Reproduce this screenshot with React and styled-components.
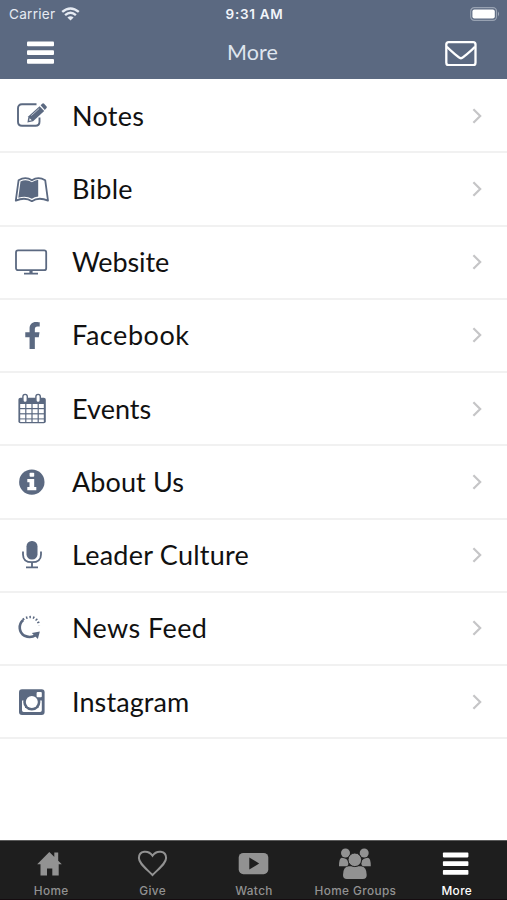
import React from "react";
import styled, { createGlobalStyle } from "styled-components";
import { FaFacebookF } from "react-icons/fa";

const GlobalStyle = createGlobalStyle`
  * {
    box-sizing: border-box;
  }
  body {
    margin: 0;
    background: #fff;
  }
`;

const Screen = styled.div`
  display: flex;
  flex-direction: column;
  width: 507px;
  height: 900px;
  overflow: hidden;
  background: #fff;
`;

const Header = styled.header`
  flex: none;
  height: 79px;
  background: #5b6981;
  color: #fff;
`;

const StatusBar = styled.div`
  display: grid;
  grid-template-columns: 1fr auto 1fr;
  align-items: center;
  height: 27px;
  padding: 0 7px 0 9px;
  font-family: Inter, "Liberation Sans", sans-serif;
  font-size: 13.6px;
  line-height: 27px;
`;

const Carrier = styled.div`
  display: flex;
  align-items: center;
  gap: 6px;
  color: #e6ebf3;
  letter-spacing: 0.25px;
`;

const Clock = styled.div`
  padding-top: 1px;
  color: #f2f5fa;
  font-weight: 600;
  font-size: 13.5px;
  letter-spacing: 0.7px;
`;

const BatterySlot = styled.div`
  display: flex;
  justify-content: flex-end;
`;

const NavBar = styled.div`
  display: grid;
  grid-template-columns: 1fr auto 1fr;
  align-items: center;
  height: 52px;
  padding: 0 30px 0 27px;
`;

const Title = styled.h1`
  margin: 0;
  padding: 0 0 2px 1px;
  color: #dfe5ee;
  font-family: Lato, "Liberation Sans", sans-serif;
  font-size: 21.5px;
  font-weight: 400;
  line-height: 50px;
  letter-spacing: 0.1px;
`;

const NavButton = styled.button`
  display: flex;
  justify-self: ${({ $end }) => ($end ? "end" : "start")};
  margin: 0;
  padding: 0;
  border: 0;
  background: none;
  color: #fff;
`;

const List = styled.main`
  flex: 1;
  padding-top: 1px;
`;

const Row = styled.div`
  display: flex;
  align-items: center;
  height: 73.25px;
  padding: 0 24px 0 14px;
  border-bottom: 2px solid #f1f1f1;
  color: #5b6981;
`;

const IconSlot = styled.div`
  display: flex;
  align-items: center;
  justify-content: center;
  width: 36px;
  height: 36px;
`;

const Label = styled.span`
  flex: 1;
  padding-left: 22px;
  color: #111;
  font-family: Lato, "Liberation Sans", sans-serif;
  font-size: 27px;
  line-height: 36px;
  letter-spacing: ${({ $tracking }) => $tracking}px;
`;

const TabBar = styled.nav`
  display: flex;
  flex: none;
  height: 60px;
  border-top: 1px solid #5a5a5a;
  border-bottom: 1px solid #150c10;
  background: #1e1e1e;
`;

const Tab = styled.div`
  display: flex;
  flex: 1;
  flex-direction: column;
  align-items: center;
  color: ${({ $active }) => ($active ? "#fff" : "#929292")};
`;

const TabLabel = styled.span`
  margin-top: 2px;
  padding-left: 1px;
  font-family: Inter, "Liberation Sans", sans-serif;
  font-size: 11.8px;
  font-weight: 500;
  line-height: 16px;
  letter-spacing: 0.4px;
`;

const WifiIcon = () => (
  <svg width="19" height="14" viewBox="0 0 19 14" fill="none" stroke="currentColor" strokeWidth="2.4">
    <path d="M1.2 4.9Q9.5-2.1 17.8 4.9" />
    <path d="M4.1 8.1Q9.5 3.4 14.9 8.1" />
    <path d="M9.5 13.6 6.4 10.6Q9.5 8 12.6 10.6Z" fill="currentColor" stroke="none" />
  </svg>
);

const BatteryIcon = () => (
  <svg width="30" height="14" viewBox="0 0 30 14">
    <rect x="0.7" y="0.7" width="25.8" height="12.6" rx="3.6" fill="none" stroke="#98a2b2" strokeWidth="1.2" />
    <rect x="2.4" y="2.4" width="22.4" height="9.2" rx="2" fill="#fff" />
    <path d="M28 4.6Q30 7 28 9.4Z" fill="#a4adbb" />
  </svg>
);

const MenuIcon = () => (
  <svg width="28" height="24" viewBox="0 0 28 24" fill="currentColor">
    <rect x="0" y="0.5" width="27" height="4.8" rx="1" />
    <rect x="0" y="9.2" width="27" height="4.8" rx="1" />
    <rect x="0" y="18" width="27" height="4.8" rx="1" />
  </svg>
);

const MailIcon = () => (
  <svg width="32" height="26" viewBox="0 0 32 26" fill="none" stroke="currentColor" strokeWidth="2.3">
    <rect x="1.3" y="2.2" width="29.2" height="23" rx="2.4" />
    <path d="M1.8 6.8C6 11.2 10 14 13.6 17.2Q15.9 19.2 18.2 17.2C21.8 14 26 11.2 30 6.8" />
  </svg>
);

const NotesIcon = () => (
  <svg width="36" height="36" viewBox="0 0 36 36">
    <path
      d="M22.5 6.3H8Q4 6.3 4 10.3V23.7Q4 27.7 8 27.7H21.5Q25.5 27.7 25.5 23.7V19.5"
      fill="none"
      stroke="currentColor"
      strokeWidth="1.9"
    />
    <path d="M13.4 24.4 14.5 18.3 25.6 8.2 30.2 13.1 19.1 23.2Z" fill="currentColor" />
    <path d="M26.6 7.3 28.5 5.6Q29.3 5 30.1 5.8L32.6 8.5Q33.3 9.3 32.5 10.1L30.8 12.1Z" fill="currentColor" />
    <path d="M17.3 17.6 25.2 10.5" stroke="#c7cdd7" strokeWidth="0.9" />
    <path d="M15.6 20.2 17.8 22.3 15.2 22.8Z" fill="#fff" />
  </svg>
);

const BookIcon = () => (
  <svg width="36" height="36" viewBox="0 0 36 36">
    <path
      d="M4.6 9.2Q11.6 5 17.9 9.3 24.2 5 31.2 9.2L34 29.6Q24.6 25.6 17.9 30.2 11.2 25.6 1.8 29.6Z"
      fill="#fff"
      stroke="currentColor"
      strokeWidth="1.8"
      strokeLinejoin="round"
    />
    <path d="M6.5 10.4Q12.4 7.5 17.9 11.2 20.6 9.2 24.2 8.7V25.6Q20.5 26 17.9 27.8 12 24.3 4.3 26.7Z" fill="currentColor" />
  </svg>
);

const MonitorIcon = () => (
  <svg width="36" height="36" viewBox="0 0 36 36">
    <rect x="2" y="6.4" width="30.2" height="19.8" rx="2" fill="none" stroke="currentColor" strokeWidth="1.8" />
    <path d="M15.4 26.5H18.6V28.8H24V30.6H10V28.8H15.4Z" fill="currentColor" />
  </svg>
);

const columns = [6.2, 12.4, 18.6, 24.8];
const lines = [13, 18.2, 23.4];

const CalendarIcon = () => (
  <svg width="36" height="36" viewBox="0 0 36 36">
    <rect x="4.4" y="6.7" width="27.4" height="25.6" rx="2" fill="currentColor" />
    {lines.map((y) =>
      columns.map((x) => <rect key={`${x}-${y}`} x={x} y={y} width="5" height="4" fill="#fff" />)
    )}
    {columns.map((x) => (
      <rect key={x} x={x} y="28.4" width="5" height="2.6" fill="#fff" />
    ))}
    <rect x="8.9" y="3.4" width="4.4" height="8" rx="2.2" fill="#fff" stroke="currentColor" strokeWidth="1.4" />
    <rect x="21.9" y="3.4" width="4.4" height="8" rx="2.2" fill="#fff" stroke="currentColor" strokeWidth="1.4" />
  </svg>
);

const InfoIcon = () => (
  <svg width="36" height="36" viewBox="0 0 36 36">
    <circle cx="17.8" cy="18.1" r="12.7" fill="currentColor" />
    <rect x="15.6" y="8.7" width="4.6" height="4" rx="0.8" fill="#fff" />
    <path d="M13.3 15H20.2V23H22.3V26.3H13.3V23H15.5V18.2H13.3Z" fill="#fff" />
  </svg>
);

const MicIcon = () => (
  <svg width="36" height="36" viewBox="0 0 36 36">
    <rect x="12.5" y="4" width="11" height="18.4" rx="5.2" fill="currentColor" />
    <path
      d="M9 14.4V17.4Q9 25.2 18 25.2T27 17.4V14.4M18 25.2V30.2M12 30.3H24"
      fill="none"
      stroke="currentColor"
      strokeWidth="1.8"
    />
  </svg>
);

const FeedIcon = () => (
  <svg width="36" height="36" viewBox="0 0 36 36" fill="none" stroke="currentColor">
    <path d="M9.2 9.9C4 14.4 4.8 22.6 10.6 25.8Q16.6 28.6 22 25" strokeWidth="2.6" />
    <path d="M17.8 23 25.8 21.4 23.9 28.9Z" fill="currentColor" stroke="none" />
    <path d="M8.9 9.6Q12.8 7 17 7 23.2 7.6 25.4 15.4" strokeWidth="2.4" strokeDasharray="1.5 2" />
  </svg>
);

const InstagramIcon = () => (
  <svg width="36" height="36" viewBox="0 0 36 36">
    <rect x="5" y="5.3" width="25.6" height="25.6" rx="3" fill="currentColor" />
    <path d="M8 16.5H11V24H24.5V16.5H27.8V26.3Q27.8 28 26.1 28H9.7Q8 28 8 26.3Z" fill="#fff" />
    <circle cx="17.8" cy="18" r="8.6" fill="currentColor" />
    <circle cx="17.8" cy="18" r="6" fill="#fff" />
    <rect x="22.6" y="8" width="5.2" height="5.2" rx="1" fill="#fff" />
  </svg>
);

const ChevronIcon = () => (
  <svg width="12" height="18" viewBox="0 0 12 18" fill="none" stroke="#c5c5c7" strokeWidth="2.2">
    <path d="M2.4 2.2 9.2 9 2.4 15.8" />
  </svg>
);

const HomeIcon = () => (
  <svg width="42" height="40" viewBox="0 0 42 40">
    <path
      d="M19.3 11 31.8 23.2H28.7V34.5H22.3V27.6H17V34.5H10.5V23.2H7.2ZM24.3 11.4H28.2V19.8L24.3 16Z"
      fill="currentColor"
    />
  </svg>
);

const HeartIcon = () => (
  <svg width="42" height="40" viewBox="0 0 42 40">
    <path
      d="M21.5 34C14 26.6 7.9 22.1 7.9 17.1 7.9 9.4 17.3 8.7 21.5 14.7 25.7 8.7 35.1 9.4 35.1 17.1 35.1 22.1 29 26.6 21.5 34Z"
      fill="none"
      stroke="currentColor"
      strokeWidth="2"
    />
  </svg>
);

const WatchIcon = () => (
  <svg width="42" height="40" viewBox="0 0 42 40">
    <rect x="5.7" y="12" width="29.6" height="21.2" rx="4.6" fill="currentColor" />
    <path d="M16.3 16.5 26.2 22.5 16.3 28.5Z" fill="#1e1e1e" />
  </svg>
);

const GroupsIcon = () => (
  <svg width="42" height="40" viewBox="0 0 42 40" fill="currentColor">
    <circle cx="11.5" cy="12" r="4.5" />
    <circle cx="30.2" cy="12" r="4.5" />
    <path d="M7.7 16.8Q5 17.3 5 25.2H12.7Q14.6 25 14.5 21Q13.2 17.2 7.7 16.8ZM34 16.8Q36.8 17.3 36.8 25.2H29.1Q27.2 25 27.3 21Q28.6 17.2 34 16.8Z" />
    <path d="M14.6 25.3H27.1Q32.7 25.8 32.7 34 32.7 37.9 28.9 37.9H12.8Q9 37.9 9 34 9 25.8 14.6 25.3Z" />
    <circle cx="20.8" cy="18.8" r="6.8" stroke="#1e1e1e" strokeWidth="1" />
  </svg>
);

const MoreIcon = () => (
  <svg width="42" height="40" viewBox="0 0 42 40" fill="currentColor">
    <rect x="7.9" y="11.6" width="25.5" height="4.8" rx="0.8" />
    <rect x="7.9" y="20.3" width="25.5" height="4.8" rx="0.8" />
    <rect x="7.9" y="29" width="25.5" height="4.8" rx="0.8" />
  </svg>
);

const menuItems = [
  { label: "Notes", icon: <NotesIcon />, tracking: 0.3 },
  { label: "Bible", icon: <BookIcon />, tracking: 0.3 },
  { label: "Website", icon: <MonitorIcon />, tracking: -0.1 },
  { label: "Facebook", icon: <FaFacebookF size={27} />, tracking: 0.55 },
  { label: "Events", icon: <CalendarIcon />, tracking: 0.05 },
  { label: "About Us", icon: <InfoIcon />, tracking: 0.1 },
  { label: "Leader Culture", icon: <MicIcon />, tracking: 0.25 },
  { label: "News Feed", icon: <FeedIcon />, tracking: 0.4 },
  { label: "Instagram", icon: <InstagramIcon />, tracking: 0.1 },
];

const tabs = [
  { label: "Home", icon: <HomeIcon /> },
  { label: "Give", icon: <HeartIcon /> },
  { label: "Watch", icon: <WatchIcon /> },
  { label: "Home Groups", icon: <GroupsIcon /> },
  { label: "More", icon: <MoreIcon />, active: true },
];

const App = () => {
  return (
    <>
      <GlobalStyle />
      <Screen>
        <Header>
          <StatusBar>
            <Carrier>
              Carrier
              <WifiIcon />
            </Carrier>
            <Clock>9:31 AM</Clock>
            <BatterySlot>
              <BatteryIcon />
            </BatterySlot>
          </StatusBar>
          <NavBar>
            <NavButton aria-label="Menu">
              <MenuIcon />
            </NavButton>
            <Title>More</Title>
            <NavButton $end aria-label="Messages">
              <MailIcon />
            </NavButton>
          </NavBar>
        </Header>
        <List>
          {menuItems.map((item) => (
            <Row key={item.label}>
              <IconSlot>{item.icon}</IconSlot>
              <Label $tracking={item.tracking}>{item.label}</Label>
              <ChevronIcon />
            </Row>
          ))}
        </List>
        <TabBar>
          {tabs.map((tab) => (
            <Tab key={tab.label} $active={tab.active}>
              {tab.icon}
              <TabLabel>{tab.label}</TabLabel>
            </Tab>
          ))}
        </TabBar>
      </Screen>
    </>
  );
};

export default App;
